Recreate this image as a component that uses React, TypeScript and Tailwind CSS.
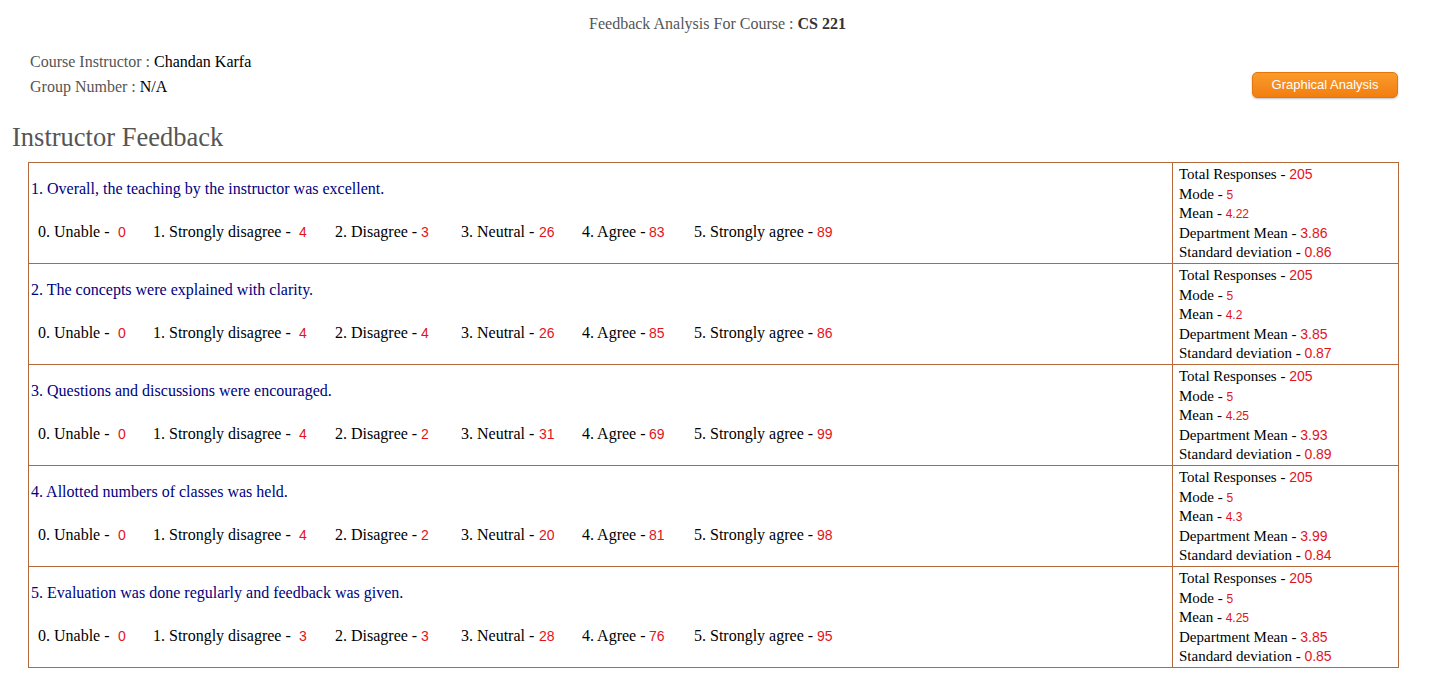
import React from "react";

type Row = {
  q: string;
  counts: number[];
  total: number;
  mode: number;
  mean: string;
  dept: string;
  sd: string;
};

const rows: Row[] = [
  { q: "1. Overall, the teaching by the instructor was excellent.", counts: [0, 4, 3, 26, 83, 89], total: 205, mode: 5, mean: "4.22", dept: "3.86", sd: "0.86" },
  { q: "2. The concepts were explained with clarity.", counts: [0, 4, 4, 26, 85, 86], total: 205, mode: 5, mean: "4.2", dept: "3.85", sd: "0.87" },
  { q: "3. Questions and discussions were encouraged.", counts: [0, 4, 2, 31, 69, 99], total: 205, mode: 5, mean: "4.25", dept: "3.93", sd: "0.89" },
  { q: "4. Allotted numbers of classes was held.", counts: [0, 4, 2, 20, 81, 98], total: 205, mode: 5, mean: "4.3", dept: "3.99", sd: "0.84" },
  { q: "5. Evaluation was done regularly and feedback was given.", counts: [0, 3, 3, 28, 76, 95], total: 205, mode: 5, mean: "4.25", dept: "3.85", sd: "0.85" },
];

// label width / value width per option, taken from the reference spacing
const options = [
  { label: "0. Unable -", lw: "w-[80px]", vw: "w-[35px]" },
  { label: "1. Strongly disagree -", lw: "w-[146px]", vw: "w-[36px]" },
  { label: "2. Disagree -", lw: "w-[86px]", vw: "w-[40px]" },
  { label: "3. Neutral -", lw: "w-[78px]", vw: "w-[43px]" },
  { label: "4. Agree -", lw: "w-[67px]", vw: "w-[45px]" },
  { label: "5. Strongly agree -", lw: "w-[123px]", vw: "w-[40px]" },
];

const num = "font-['Liberation_Sans',Arial,sans-serif] text-[#e3121b]";

const StatLine = ({ label, value, small }: { label: string; value: string | number; small?: boolean }) => (
  <div className="h-[19.5px] leading-[19.5px] whitespace-nowrap">
    {label} - <span className={`${num} ${small ? "text-[12px]" : "text-[14px]"}`}>{value}</span>
  </div>
);

export default function App() {
  return (
    <div className="min-h-screen bg-white font-['Liberation_Serif','Times_New_Roman',serif] text-[16px] text-black">
      <div className="pt-[12px] text-center text-[#555]">
        Feedback Analysis For Course : <b className="text-[#333]">CS 221</b>
      </div>

      <div className="flex items-end justify-between pl-[30px] pr-[37px] mt-[13px]">
        <div className="leading-[25px]">
          <div className="text-[#555]">
            Course Instructor : <span className="text-black">Chandan Karfa</span>
          </div>
          <div className="text-[#555]">
            Group Number : <span className="text-black">N/A</span>
          </div>
        </div>
        <button className="mb-[1px] h-[26px] w-[146px] rounded-[5px] border border-[#e5760a] bg-gradient-to-b from-[#f99b2a] to-[#f27e0f] font-['Liberation_Sans',Arial,sans-serif] text-[13px] text-white shadow-[0_1px_2px_rgba(0,0,0,0.25)]">
          Graphical Analysis
        </button>
      </div>

      <h2 className="mt-[23px] pl-[12px] text-[26.5px] leading-[30px] text-[#555] font-['Liberation_Serif',serif]">
        Instructor Feedback
      </h2>

      <table className="ml-[28px] mt-[10px] w-[1371px] border-collapse">
        <tbody>
          {rows.map((r, i) => (
            <tr key={i} className="h-[101px]">
              <td className="w-[1144px] border border-[#b5693b] px-[2px] align-top">
                <div className="mt-[16px] text-[#000080] leading-[20px]">{r.q}</div>
                <div className="mt-[23px] flex pl-[7px] leading-[20px] whitespace-nowrap">
                  {options.map((o, j) => (
                    <div key={j} className="flex">
                      <span className={o.lw}>{o.label}</span>
                      <span className={`${o.vw} ${num} text-[14px]`}>{r.counts[j]}</span>
                    </div>
                  ))}
                </div>
              </td>
              <td className="border border-[#b5693b] pl-[6px] align-top pt-[2px] text-[15px]">
                <StatLine label="Total Responses" value={r.total} />
                <StatLine label="Mode" value={r.mode} small />
                <StatLine label="Mean" value={r.mean} small />
                <StatLine label="Department Mean" value={r.dept} />
                <StatLine label="Standard deviation" value={r.sd} />
              </td>
            </tr>
          ))}
        </tbody>
      </table>
    </div>
  );
}
